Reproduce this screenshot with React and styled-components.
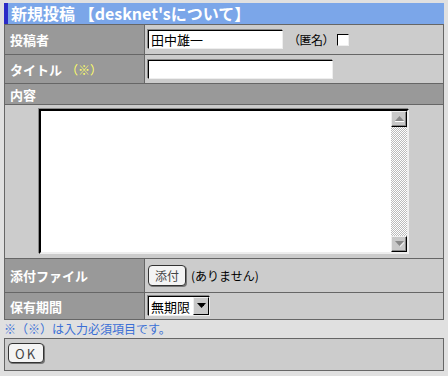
import React from "react";
import styled, { createGlobalStyle } from "styled-components";

const GlobalStyle = createGlobalStyle`
  body {
    margin: 0;
    background: #e0e0e0;
    font-family: "Noto Sans CJK JP", "DejaVu Sans", sans-serif;
    font-size: 12px;
    color: #000;
  }
`;

const Page = styled.div`
  width: 440px;
  padding: 3px 4px 0 4px;
`;

const Title = styled.h1`
  margin: 0;
  height: 21px;
  line-height: 20px;
  background: #7ba6e9;
  border-left: 4px solid #2b2bc6;
  padding-left: 3px;
  color: #fff;
  font-size: 16px;
  font-weight: bold;
  white-space: nowrap;
`;

const Form = styled.div`
  display: grid;
  grid-template-columns: 139px 1fr;
  grid-template-rows: 29px 28px 20px 153px 33px 26px;
  gap: 1px;
  background: #666;
  border: 1px solid #666;
`;

const Label = styled.div`
  background: #999;
  color: #fff;
  font-weight: bold;
  font-size: 13px;
  display: flex;
  align-items: center;
  padding-left: 5px;
  grid-column: ${({ $wide }) => ($wide ? "1 / 3" : "auto")};
`;

const Required = styled.span`
  color: #ffff66;
  font-weight: normal;
  font-size: 12px;
  margin-left: 4px;
`;

const Value = styled.div`
  background: #ccc;
  display: flex;
  align-items: center;
  gap: 4px;
  padding-left: 3px;
`;

const AreaCell = styled.div`
  grid-column: 1 / 3;
  background: #ccc;
  display: flex;
  justify-content: center;
  padding-top: 4px;
`;

const TextInput = styled.input`
  box-sizing: border-box;
  width: ${({ $w }) => $w}px;
  height: 19px;
  margin: 0;
  padding: 0 2px;
  background: #fff;
  border: 1px solid;
  border-color: #000 #eee #eee #000;
  box-shadow: -1px -1px 0 #888;
  font-family: inherit;
  font-size: 13px;
  outline: none;
`;

const Hint = styled.span`
  font-size: 12px;
  margin-left: 1px;
  letter-spacing: ${({ $ls }) => $ls || 0}px;
`;

const Check = styled.span`
  display: inline-block;
  box-sizing: border-box;
  width: 12px;
  height: 12px;
  margin-left: -1px;
  background: #fff;
  border: 1px solid;
  border-color: #000 #eee #eee #000;
`;

const AreaBox = styled.div`
  box-sizing: border-box;
  width: 370px;
  height: 145px;
  display: flex;
  background: #fff;
  border: 2px solid;
  border-color: #000 #eee #eee #000;
  box-shadow: -1px -1px 0 #888;
`;

const TextArea = styled.textarea`
  flex: 1;
  border: 0;
  margin: 0;
  resize: none;
  outline: none;
  font-family: inherit;
  font-size: 12px;
`;

const ScrollBar = styled.div`
  width: 16px;
  display: flex;
  flex-direction: column;
  background-color: #fff;
  background-image: repeating-conic-gradient(#bbb 0 25%, #fff 0 50%);
  background-size: 2px 2px;
`;

const ScrollButton = styled.div`
  box-sizing: border-box;
  height: 16px;
  background: #c8c8c8;
  border: 1px solid;
  border-color: #eee #000 #000 #eee;
  box-shadow: inset -1px -1px 0 #888;
  display: flex;
  align-items: center;
  justify-content: center;
  margin-top: ${({ $bottom }) => ($bottom ? "auto" : "0")};
`;

const Track = styled.div`
  flex: 1;
`;

const PlainButton = styled.button`
  box-sizing: border-box;
  height: ${({ $h }) => $h}px;
  padding: 0 6px;
  margin: 0;
  background: #f4f4f4;
  border: 1px solid #333;
  border-radius: 4px;
  box-shadow: 1px 1px 0 #777;
  font-family: inherit;
  font-size: ${({ $fs }) => $fs}px;
  color: #444;
  letter-spacing: ${({ $ls }) => $ls || 0}px;
  display: flex;
  align-items: center;
`;

const Select = styled.div`
  box-sizing: border-box;
  height: 20px;
  display: flex;
  align-items: stretch;
  background: #fff;
  border: 1px solid;
  border-color: #000 #eee #eee #000;
  box-shadow: -1px -1px 0 #888;
  font-size: 13px;
`;

const SelectText = styled.span`
  padding: 0 3px 0 2px;
  display: flex;
  align-items: center;
`;

const SelectArrow = styled.span`
  box-sizing: border-box;
  width: 16px;
  background: #c8c8c8;
  border: 1px solid;
  border-color: #eee #000 #000 #eee;
  display: flex;
  align-items: center;
  justify-content: center;
`;

const Note = styled.div`
  color: #3a6fd6;
  font-size: 12px;
  height: 18px;
  line-height: 18px;
`;

const Footer = styled.div`
  height: 33px;
  box-sizing: border-box;
  background: #ccc;
  border: 1px solid #666;
  padding: 4px 0 0 3px;
`;

const Up = ({ dark }) => (
  <svg width="9" height="6" viewBox="0 0 9 6">
    <path d="M4.5 0 L9 5 L0 5 Z" fill={dark ? "#000" : "#888"} />
    {!dark && <path d="M0 5 H9 V6 H0 Z" fill="#fff" />}
  </svg>
);

const Down = ({ dark }) => (
  <svg width="9" height="6" viewBox="0 0 9 6">
    <path d="M0 0 L9 0 L4.5 5 Z" fill={dark ? "#000" : "#888"} />
    {!dark && <path d="M5 5 L9 1 V2 L5 6 Z" fill="#fff" />}
  </svg>
);

const App = () => {
  return (
    <Page>
      <GlobalStyle />
      <Title>新規投稿 【desknet'sについて】</Title>
      <Form>
        <Label>投稿者</Label>
        <Value>
          <TextInput $w={135} defaultValue="田中雄一" />
          <Hint $ls={-0.5}>（匿名）</Hint>
          <Check />
        </Value>

        <Label>
          タイトル<Required>（※）</Required>
        </Label>
        <Value>
          <TextInput $w={185} />
        </Value>

        <Label $wide>内容</Label>
        <AreaCell>
          <AreaBox>
            <TextArea />
            <ScrollBar>
              <ScrollButton>
                <Up />
              </ScrollButton>
              <Track />
              <ScrollButton $bottom>
                <Down />
              </ScrollButton>
            </ScrollBar>
          </AreaBox>
        </AreaCell>

        <Label>添付ファイル</Label>
        <Value>
          <PlainButton $h={21} $fs={12}>添付</PlainButton>
          <Hint>(ありません)</Hint>
        </Value>

        <Label>保有期間</Label>
        <Value>
          <Select>
            <SelectText>無期限</SelectText>
            <SelectArrow>
              <Down dark />
            </SelectArrow>
          </Select>
        </Value>
      </Form>
      <Note>※（※）は入力必須項目です。</Note>
      <Footer>
        <PlainButton $h={20} $fs={13} $ls={2}>OK</PlainButton>
      </Footer>
    </Page>
  );
};

export default App;
